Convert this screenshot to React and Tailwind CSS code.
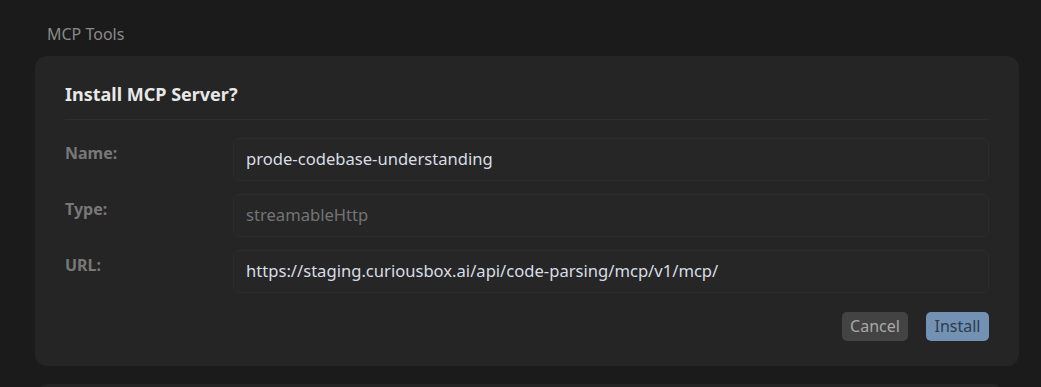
export default function App() {
  const rows = [
    { label: "Name:", value: "prode-codebase-understanding", dim: false },
    { label: "Type:", value: "streamableHttp", dim: true },
    { label: "URL:", value: "https://staging.curiousbox.ai/api/code-parsing/mcp/v1/mcp/", dim: false },
  ];
  return (
    <div className="w-full h-[387px] bg-[#1b1b1b] overflow-hidden font-['Noto_Sans',sans-serif]">
      <div className="pl-[47px] pt-[23px] h-[56px] text-[16px] leading-[22px] text-[#8a8a8a]">MCP Tools</div>
      <div className="mx-[35px] w-[984px] rounded-[12px] bg-[#252525] px-[30px] pt-[25px] pb-[25px]">
        <div className="text-[18px] leading-[26px] font-bold text-[#e8e8e8] pb-[12px] border-b border-[#2e2e2e]">
          Install MCP Server?
        </div>
        <div className="flex flex-col gap-[13px] pt-[18px]">
          {rows.map((r) => (
            <div key={r.label} className="flex items-start">
              <div className="w-[168px] pt-[5px] text-[16px] leading-[20px] font-bold text-[#787878]">{r.label}</div>
              <div className={`flex-1 h-[43px] flex items-center rounded-[6px] border border-[#2c2c2c] bg-[#262626] pl-[12px] text-[16.6px] ${r.dim ? "text-[#747474]" : "text-[#d8dde5]"}`}>
                {r.value}
              </div>
            </div>
          ))}
        </div>
        <div className="flex justify-end gap-[18px] pt-[19px]">
          <button className="h-[29px] w-[66px] rounded-[5px] bg-[#434343] text-[#a9a9a9] text-[16px] leading-[29px]">Cancel</button>
          <button className="h-[29px] w-[63px] rounded-[5px] bg-[#7391b3] text-[#2d3c4e] text-[16px] leading-[29px]">Install</button>
        </div>
      </div>
      <div className="mx-[38px] mt-[18px] h-[20px] rounded-t-[10px] bg-[#242424]"></div>
    </div>
  );
}
